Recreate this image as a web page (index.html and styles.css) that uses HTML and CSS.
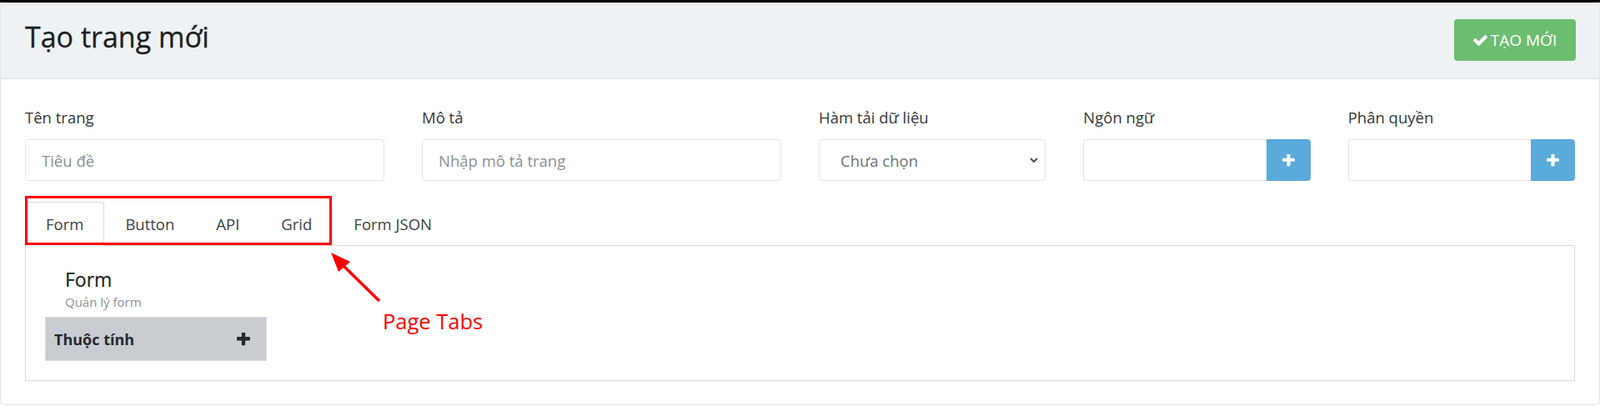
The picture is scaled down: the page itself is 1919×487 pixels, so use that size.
FILE: index.html
```html
<!DOCTYPE html>
<html lang="vi">
<head>
<meta charset="utf-8">
<title>Tạo trang mới</title>
<link rel="stylesheet" href="styles.css">
</head>
<body>
<div class="topbar"></div>
<div class="card">
  <div class="card-header">
    <h3 class="title">Tạo trang mới</h3>
    <button class="btn-create" type="button">
      <svg class="ico-check" viewBox="121 334 1550 1188" aria-hidden="true"><path d="M1671 566q0 40-28 68l-724 724-136 136q-28 28-68 28t-68-28l-136-136-362-362q-28-28-28-68t28-68l136-136q28-28 68-28t68 28l294 295 656-657q28-28 68-28t68 28l136 136q28 28 28 68z"/></svg>
      <span>TẠO MỚI</span>
    </button>
  </div>
  <div class="card-body">
    <div class="row">
      <div class="col col-3">
        <label class="lbl">Tên trang</label>
        <input class="control" type="text" placeholder="Tiêu đề">
      </div>
      <div class="col col-3">
        <label class="lbl">Mô tả</label>
        <input class="control" type="text" placeholder="Nhập mô tả trang">
      </div>
      <div class="col col-2">
        <label class="lbl">Hàm tải dữ liệu</label>
        <div class="control select">
          <span>Chưa chọn</span>
          <svg class="chev" viewBox="0 0 10 6" aria-hidden="true"><polyline points="1,1 5,5 9,1"/></svg>
        </div>
      </div>
      <div class="col col-2">
        <label class="lbl">Ngôn ngữ</label>
        <div class="input-group">
          <input class="control grp" type="text">
          <button class="btn-add" type="button"><svg class="ico-plus" viewBox="192 192 1408 1408" aria-hidden="true"><path d="M1600 736v192q0 40-28 68t-68 28h-416v416q0 40-28 68t-68 28h-192q-40 0-68-28t-28-68v-416h-416q-40 0-68-28t-28-68v-192q0-40 28-68t68-28h416v-416q0-40 28-68t68-28h192q40 0 68 28t28 68v416h416q40 0 68 28t28 68z"/></svg></button>
        </div>
      </div>
      <div class="col col-2">
        <label class="lbl">Phân quyền</label>
        <div class="input-group">
          <input class="control grp" type="text">
          <button class="btn-add" type="button"><svg class="ico-plus" viewBox="192 192 1408 1408" aria-hidden="true"><path d="M1600 736v192q0 40-28 68t-68 28h-416v416q0 40-28 68t-68 28h-192q-40 0-68-28t-28-68v-416h-416q-40 0-68-28t-28-68v-192q0-40 28-68t68-28h416v-416q0-40 28-68t68-28h192q40 0 68 28t28 68v416h416q40 0 68 28t28 68z"/></svg></button>
        </div>
      </div>
    </div>

    <ul class="tabs">
      <li class="tab active">Form</li>
      <li class="tab">Button</li>
      <li class="tab">API</li>
      <li class="tab">Grid</li>
      <li class="tab">Form JSON</li>
    </ul>
    <div class="tab-panel">
      <div class="sec-head">
        <div class="sec-title">Form</div>
        <div class="sec-sub">Quản lý form</div>
      </div>
      <div class="prop-bar">
        <span>Thuộc tính</span>
        <svg class="ico-plus dark" viewBox="192 192 1408 1408" aria-hidden="true"><path d="M1600 736v192q0 40-28 68t-68 28h-416v416q0 40-28 68t-68 28h-192q-40 0-68-28t-28-68v-416h-416q-40 0-68-28t-28-68v-192q0-40 28-68t68-28h416v-416q0-40 28-68t68-28h192q40 0 68 28t28 68v416h416q40 0 68 28t28 68z"/></svg>
      </div>
    </div>
  </div>
</div>

<div class="annot-box"></div>
<svg class="annot-arrow" viewBox="390 295 75 75" aria-hidden="true">
  <line x1="410" y1="317" x2="455" y2="361"/>
  <polygon points="397,303 420,314 406,326"/>
</svg>
<div class="annot-label">Page Tabs</div>
</body>
</html>
```

FILE: styles.css
```css
* { box-sizing: border-box; }

html, body {
  margin: 0;
  padding: 0;
  background: #ffffff;
}

body {
  position: relative;
  font-family: "Open Sans", "Noto Sans", "Liberation Sans", sans-serif;
  font-size: 18.5px;
  color: #343a40;
  height: 487px;
  overflow: hidden;
}

.topbar {
  height: 3px;
  background: #000;
}

.card {
  border: 1px solid #e0e3e7;
  border-radius: 6px;
  background: #fff;
}

.card-header {
  height: 91px;
  background: #eef2f5;
  border-bottom: 1px solid #dadfe4;
  border-radius: 5px 5px 0 0;
  display: flex;
  align-items: center;
  justify-content: space-between;
  padding: 0 28px 0 29px;
}

.title {
  margin: 0 0 10px 0;
  font-size: 34px;
  font-weight: 400;
  line-height: 41px;
  color: #1c1f22;
  -webkit-text-stroke: 0.3px #1c1f22;
}

.btn-create {
  width: 146px;
  height: 50px;
  margin-bottom: 2px;
  border: none;
  border-radius: 4px;
  background: #6cbd70;
  color: #fff;
  font-family: inherit;
  font-size: 19px;
  display: inline-flex;
  align-items: center;
  justify-content: center;
  gap: 4px;
  padding: 0;
}

.ico-check {
  width: 17px;
  height: 13px;
  fill: #fff;
}

.card-body {
  padding: 32px 29px 28px 29px;
}

.row {
  display: flex;
  margin: 0 -22.5px;
}

.col {
  padding: 0 22.5px;
  min-width: 0;
}

.col-3 { flex: 0 0 25%; }
.col-2 { flex: 0 0 16.6667%; }

.lbl {
  display: block;
  line-height: 28px;
  margin-bottom: 12px;
  color: #33373b;
}

.control {
  display: block;
  width: 100%;
  height: 50px;
  border: 1px solid #e1e5e9;
  border-radius: 4px;
  padding: 0 19px;
  font-family: inherit;
  font-size: 18.5px;
  color: #495057;
  background: #fff;
  outline: none;
}

.control::placeholder {
  color: #8a9198;
}

.select {
  display: flex;
  align-items: center;
  justify-content: space-between;
  padding: 0 8px 0 25px;
  color: #6c737a;
}

.chev {
  width: 10px;
  height: 6px;
  fill: none;
  stroke: #4a4f55;
  stroke-width: 2;
}

.input-group {
  display: flex;
  width: 100%;
}

.control.grp {
  flex: 1 1 0;
  width: 0;
  min-width: 0;
  border-radius: 4px 0 0 4px;
  border-right: 0;
}

.btn-add {
  flex: 0 0 53px;
  height: 50px;
  border: none;
  border-radius: 0 4px 4px 0;
  background: #5aaadb;
  display: flex;
  align-items: center;
  justify-content: center;
  padding: 0;
}

.ico-plus {
  width: 15px;
  height: 15px;
  fill: #fff;
}

.ico-plus.dark {
  width: 16px;
  height: 16px;
  fill: #26292c;
}

.tabs {
  list-style: none;
  margin: 25px 0 0 0;
  padding: 0;
  display: flex;
  border-bottom: 1px solid #d6d9dd;
}

.tab {
  padding: 12px 24px 11px 24px;
  line-height: 28px;
  border: 1px solid transparent;
  margin-bottom: -1px;
  color: #3d4247;
}

.tab.active {
  background: #fff;
  border-color: #d6d9dd #d6d9dd #fff #d6d9dd;
  border-radius: 4px 4px 0 0;
}

.tab-panel {
  border: 1px solid #d6d9dd;
  border-top: 0;
  padding: 23px;
}

.sec-head {
  padding-left: 24px;
}

.sec-title {
  margin-top: 3px;
  font-size: 23px;
  line-height: 29px;
  color: #1c1f22;
  -webkit-text-stroke: 0.2px #1c1f22;
}

.sec-sub {
  margin-top: 2px;
  font-size: 15px;
  line-height: 20px;
  color: #8b9298;
}

.prop-bar {
  margin-top: 8px;
  width: 266px;
  height: 53px;
  background: #c9ccd0;
  border: 1px solid #dadcdf;
  display: flex;
  align-items: center;
  justify-content: space-between;
  padding: 0 19px 0 10px;
  font-weight: 700;
  font-size: 18px;
  color: #25282b;
}

/* annotation overlay */
.annot-box {
  position: absolute;
  left: 30px;
  top: 235px;
  width: 368px;
  height: 59px;
  border: 3px solid #ff0000;
}

.annot-arrow {
  position: absolute;
  left: 390px;
  top: 295px;
  width: 75px;
  height: 75px;
}

.annot-arrow line {
  stroke: #ff0000;
  stroke-width: 3.5;
}

.annot-arrow polygon {
  fill: #ff0000;
}

.annot-label {
  position: absolute;
  left: 459px;
  top: 370px;
  font-size: 25.5px;
  line-height: 30px;
  color: #ff0000;
}
```
